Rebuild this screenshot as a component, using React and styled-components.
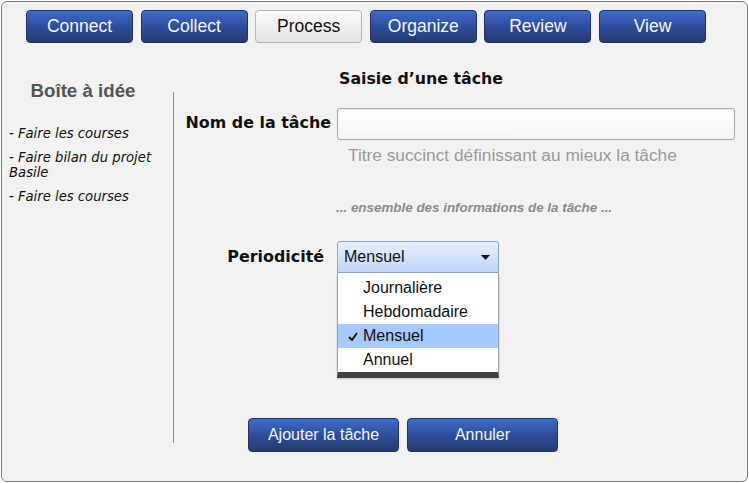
import React from "react";
import styled, { createGlobalStyle } from "styled-components";

const Global = createGlobalStyle`
  html, body { margin: 0; padding: 0; background: #ffffff; }
  * { box-sizing: border-box; }
`;

const Frame = styled.div`
  margin: 1px 0 0 1px;
  width: 747px;
  height: 481px;
  border: 1px solid #7e7e7e;
  border-radius: 6px;
  background: #f2f2f2;
  font-family: "Liberation Sans", Arial, sans-serif;
  display: flex;
  flex-direction: column;
  overflow: hidden;
`;

const Nav = styled.nav`
  display: flex;
  gap: 7.6px;
  padding: 8px 0 0 24px;
  height: 41px;
`;

const NavButton = styled.button`
  width: 107px;
  height: 33px;
  border-radius: 4px;
  font-family: "Liberation Sans", Arial, sans-serif;
  font-size: 17.5px;
  padding: 0;
  cursor: pointer;
  border: 1px solid ${(p) => (p.$active ? "#b4b4b4" : "#22315e")};
  color: ${(p) => (p.$active ? "#111" : "#f4f6fb")};
  background: ${(p) =>
    p.$active
      ? "linear-gradient(#fbfbfb, #e4e4e4)"
      : "linear-gradient(#3f6ccd, #2d4b97 55%, #263a6e)"};
`;

const Body = styled.div`
  flex: 1;
  display: grid;
  grid-template-columns: 171px 1fr;
`;

const Sidebar = styled.aside`
  display: flex;
  flex-direction: column;
  padding: 37px 0 0 7px;
`;

const SideTitle = styled.h2`
  margin: 0 16px 24px 0;
  text-align: center;
  font-family: "Liberation Sans", Arial, sans-serif;
  font-weight: bold;
  font-size: 18.7px;
  line-height: 22px;
  color: #555;
`;

const IdeaList = styled.ul`
  list-style: none;
  margin: 0;
  padding: 0;
  display: flex;
  flex-direction: column;
  gap: 9px;
`;

const Idea = styled.li`
  font-family: "DejaVu Sans", sans-serif;
  font-style: italic;
  font-size: 13.2px;
  line-height: 15px;
  color: #111;
`;

const Main = styled.main`
  position: relative;
  display: flex;
  flex-direction: column;
  padding-top: 26px;
  &::before {
    content: "";
    position: absolute;
    left: 0;
    top: 49px;
    width: 1px;
    height: 351px;
    background: #8c8c8c;
  }
`;

const FormTitle = styled.h1`
  margin: 0 0 20px 166px;
  font-family: "DejaVu Sans", sans-serif;
  font-weight: bold;
  font-size: 15.8px;
  line-height: 19px;
  color: #111;
`;

const FieldRow = styled.div`
  display: grid;
  grid-template-columns: 158px 398px;
  column-gap: 6px;
  align-items: center;
  margin-top: ${(p) => p.$top || 0}px;
`;

const Label = styled.label`
  text-align: right;
  padding-right: ${(p) => p.$pr || 0}px;
  padding-bottom: ${(p) => p.$pb || 0}px;
  font-family: "DejaVu Sans", sans-serif;
  font-weight: bold;
  font-size: 15.9px;
  line-height: 19px;
  color: #111;
`;

const TextInput = styled.input`
  height: 32px;
  width: 398px;
  border: 1px solid #a9a9a9;
  border-radius: 3px;
  background: linear-gradient(#ffffff, #f4f4f4);
  box-shadow: inset 0 1px 1px rgba(0, 0, 0, 0.08);
  font-size: 16px;
  padding: 0 8px;
`;

const Hint = styled.div`
  margin: 5px 0 0 175px;
  font-size: 17.3px;
  line-height: 20px;
  color: #9a9a9a;
`;

const Info = styled.div`
  margin: 35px 0 0 163px;
  font-size: 13.4px;
  line-height: 16px;
  font-style: italic;
  font-weight: bold;
  color: #8a8a8a;
`;

const SelectWrap = styled.div`
  position: relative;
  width: 162px;
`;

const SelectBox = styled.div`
  height: 32px;
  border: 1px solid #8ba6d2;
  border-radius: 3px 3px 0 0;
  background: linear-gradient(#e8f1fe, #bcd5f9);
  display: flex;
  align-items: center;
  justify-content: space-between;
  padding: 0 8px 0 6px;
  font-size: 16px;
  color: #111;
`;

const Menu = styled.ul`
  position: absolute;
  top: 32px;
  left: 0;
  width: 162px;
  margin: 0;
  padding: 3px 0 0;
  list-style: none;
  background: #fff;
  border: 1px solid #a0a0a0;
  border-top: none;
  border-bottom: 6px solid #404040;
  box-shadow: 0 1px 2px rgba(0, 0, 0, 0.2);
`;

const MenuItem = styled.li`
  position: relative;
  height: 24px;
  line-height: 24px;
  padding-left: 25px;
  font-size: 16px;
  color: #111;
  background: ${(p) => (p.$selected ? "#a6c9fb" : "transparent")};
`;

const Check = styled.svg`
  position: absolute;
  left: 10px;
  top: 8px;
`;

const Actions = styled.div`
  display: flex;
  gap: 8px;
  margin: 145px 0 0 75px;
`;

const ActionButton = styled(NavButton)`
  width: 151px;
  height: 34px;
  font-size: 16px;
`;

const ideas = ["- Faire les courses", ["- Faire bilan du projet", "Basile"], "- Faire les courses"];
const tabs = ["Connect", "Collect", "Process", "Organize", "Review", "View"];
const options = ["Journalière", "Hebdomadaire", "Mensuel", "Annuel"];

export default function App() {
  return (
    <>
      <Global />
      <Frame>
        <Nav>
          {tabs.map((t) => (
            <NavButton key={t} $active={t === "Process"}>
              {t}
            </NavButton>
          ))}
        </Nav>
        <Body>
          <Sidebar>
            <SideTitle>Boîte à idée</SideTitle>
            <IdeaList>
              {ideas.map((it, i) => (
                <Idea key={i}>
                  {Array.isArray(it) ? (
                    <>
                      {it[0]}
                      <br />
                      {it[1]}
                    </>
                  ) : (
                    it
                  )}
                </Idea>
              ))}
            </IdeaList>
          </Sidebar>
          <Main>
            <FormTitle>Saisie d’une tâche</FormTitle>
            <FieldRow>
              <Label $pb={4}>Nom de la tâche</Label>
              <TextInput type="text" />
            </FieldRow>
            <Hint>Titre succinct définissant au mieux la tâche</Hint>
            <Info>... ensemble des informations de la tâche ...</Info>
            <FieldRow $top={25}>
              <Label $pr={7} $pb={2}>Periodicité</Label>
              <SelectWrap>
                <SelectBox>
                  <span>Mensuel</span>
                  <svg width="9" height="5" viewBox="0 0 9 5">
                    <polygon points="0,0 9,0 4.5,5" fill="#111" />
                  </svg>
                </SelectBox>
                <Menu>
                  {options.map((o) => (
                    <MenuItem key={o} $selected={o === "Mensuel"}>
                      {o === "Mensuel" && (
                        <Check width="10" height="9" viewBox="0 0 10 9">
                          <polyline points="1,5 4,8 9,1" fill="none" stroke="#111" strokeWidth="2" />
                        </Check>
                      )}
                      {o}
                    </MenuItem>
                  ))}
                </Menu>
              </SelectWrap>
            </FieldRow>
            <Actions>
              <ActionButton>Ajouter la tâche</ActionButton>
              <ActionButton>Annuler</ActionButton>
            </Actions>
          </Main>
        </Body>
      </Frame>
    </>
  );
}
